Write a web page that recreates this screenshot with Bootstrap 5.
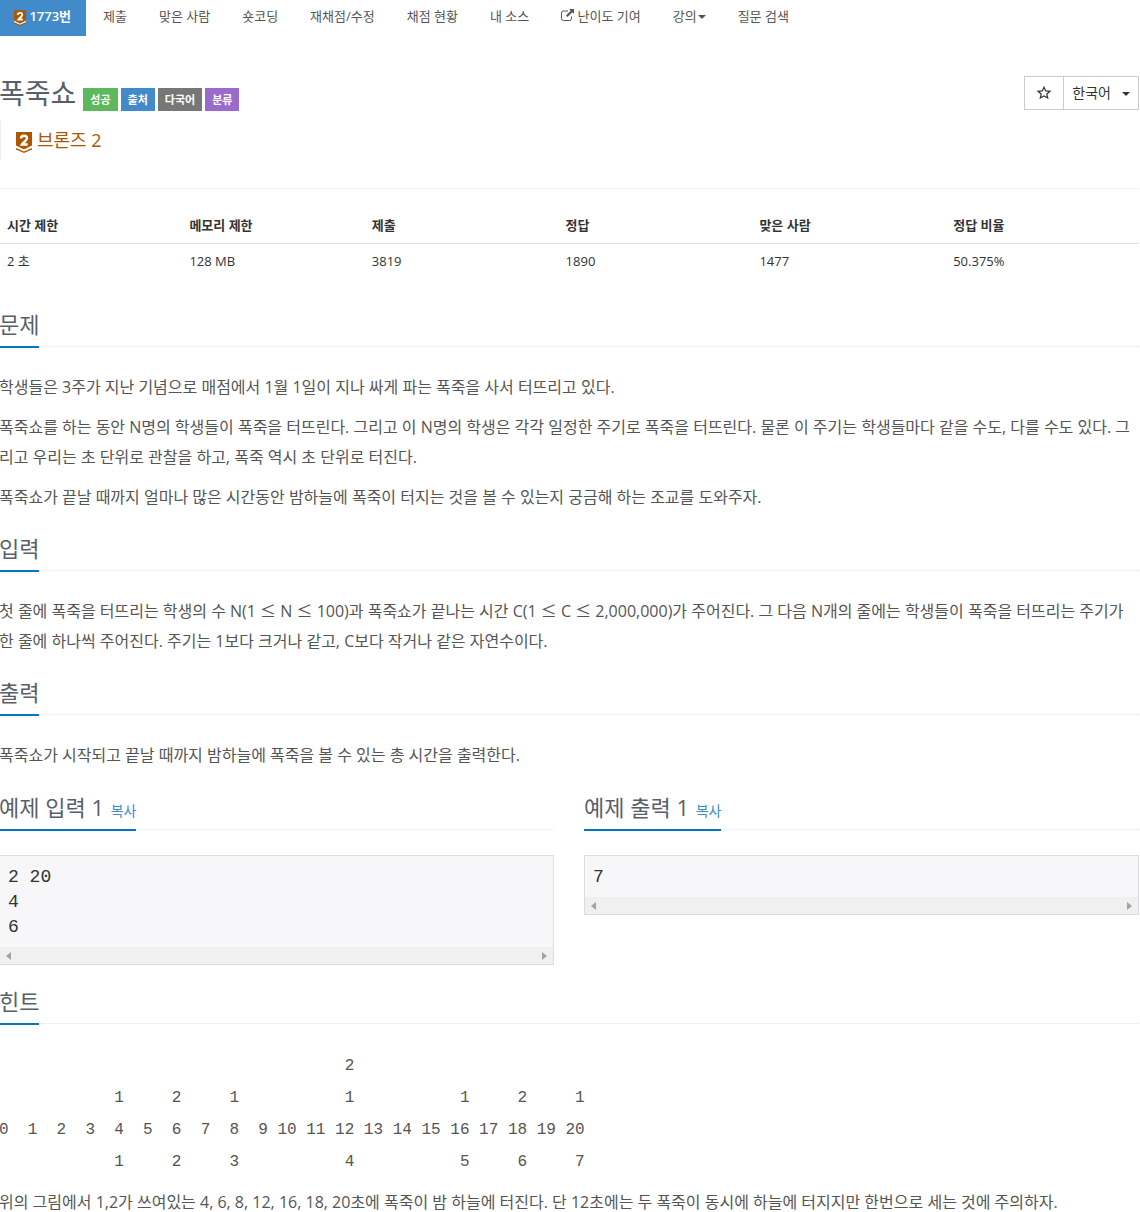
<!DOCTYPE html>
<html lang="ko">
<head>
<meta charset="utf-8">
<meta name="viewport" content="width=device-width, initial-scale=1">
<title>1773번: 폭죽쇼</title>
<link href="https://cdn.jsdelivr.net/npm/bootstrap@5.3.0/dist/css/bootstrap.min.css" rel="stylesheet">
<style>
body{font-family:"Open Sans","Noto Sans CJK KR",sans-serif;font-size:13px;line-height:20px;color:#333}
.page-wrap{margin:0 1px 0 -1px}
a{text-decoration:none;color:#428bca}
.problem-menu{gap:2px;margin-bottom:40px}
.problem-menu .nav-link{border-radius:0;color:#555;padding:6px 15px 10px}
.problem-menu .nav-link.active{background:#428bca;color:#fff;font-weight:600}
.title-row{min-height:35px}
h1{font-size:28px;line-height:35px;font-weight:400;color:#585f69;margin:0 7px 0 0}
.tag-list{gap:3px}
.tag-label{font-size:11px;line-height:15px;font-weight:700;color:#fff;padding:4px 7px}
.bg-ok{background:#5cb85c}.bg-src{background:#428bca}.bg-lang{background:#777}.bg-cls{background:#9b6bcc}
.btn-plain{border:1px solid #ccc;border-radius:0;background:#fff;color:#333;font-size:14px;line-height:20px;padding:6px 8px}
.btn-star{padding:4px 12px 8px}
.btn-plain.dropdown-toggle::after{margin-left:11px}
.dropdown-toggle::after{border-top:4px solid;border-right:4px solid transparent;border-left:4px solid transparent;margin-left:1px;vertical-align:2px}
.tier-line{border-left:2px solid #eee;margin:10px 0 28px;padding:7px 15px;font-size:18px;line-height:24px;color:#ad5600;gap:5px}
.big-tier{margin-top:4px}
.rule{border:0;border-top:1px solid #eee;opacity:1;margin:0 0 20px}
#problem-info{font-size:13px;margin:0 0 30px;table-layout:fixed}
#problem-info th,#problem-info td{line-height:20px;color:#333;border:0;background:none}
#problem-info th{font-weight:700;border-bottom:1px solid #ddd;padding:6px 8px 8px}
#problem-info td{padding:7px 8px 8px}
#problem-info .w-s{width:16%}
#problem-info .w-m{width:17%}
.headline{border-bottom:1px dotted #dfe3ea;margin:0 0 25px}
.headline h2{display:inline-block;font-size:22px;line-height:30px;font-weight:400;color:#585f69;border-bottom:2px solid #0077c0;padding-bottom:7px;margin:0 0 -2px;vertical-align:top}
.headline h2 a{font-size:14px;line-height:14px;margin-left:1px}
.problem-text{font-size:16px;line-height:30px;color:#555;margin-bottom:21px}
.problem-text p{margin:0 0 10px}
.problem-text p:last-child{margin:0}
.rel{font-family:"Noto Sans CJK KR",sans-serif;line-height:20px}
.sample-row{--bs-gutter-x:30px;margin-bottom:21px;padding-top:1px}
.sample-box{border:1px solid #dcdce2;background:#f7f7f9}
.sample-box pre{font-family:"Liberation Mono",monospace;font-size:18px;line-height:25px;color:#333;margin:0;padding:9px 8px 7px}
.scroll-track{background:#f0f0f0;height:17px;padding:0 6px}
.hint-pre{font-family:"Liberation Mono",monospace;font-size:16px;line-height:32px;color:#555;margin:0 0 14px;padding-top:1px;overflow:hidden}
.hint-note{font-size:16px;line-height:20px;color:#555;margin:0}
</style>
<script src="https://cdn.jsdelivr.net/npm/bootstrap@5.3.0/dist/js/bootstrap.bundle.min.js"></script>
</head>
<body>
<div class="page-wrap">
<ul class="nav nav-pills problem-menu">
<li class="nav-item"><a class="nav-link active" href="#"><svg class="align-middle" width="12" height="16" viewBox="0 0 16 21"><path fill="#ad5600" d="M0 0h16v13.500l-8 4-8-4z"/><path fill="#fff" d="M0 14l8 4 8-4v2l-8 4-8-4z"/><path fill="#ad5600" d="M0 16l8 3.500 8-3.500v1.500L8 21l-8-3.500z"/><path fill="none" stroke="#fff" stroke-width="2.500" d="M5 6.500C5 3 11 2.700 11 6.200 11 8.500 7.500 10 6 12.500H11.700"/></svg> 1773번</a></li>
<li class="nav-item"><a class="nav-link" href="#">제출</a></li>
<li class="nav-item"><a class="nav-link" href="#">맞은 사람</a></li>
<li class="nav-item"><a class="nav-link" href="#">숏코딩</a></li>
<li class="nav-item"><a class="nav-link" href="#">재채점/수정</a></li>
<li class="nav-item"><a class="nav-link" href="#">채점 현황</a></li>
<li class="nav-item"><a class="nav-link" href="#">내 소스</a></li>
<li class="nav-item"><a class="nav-link" href="#"><svg class="align-baseline" width="13" height="12" viewBox="0 0 13 12"><path fill="none" stroke="#555" d="M7 2H2.500Q.5 2 .5 4v5.500Q.5 11.500 2.500 11.500h6Q10.500 11.500 10.500 9.500V7.500"/><path fill="#555" d="M8 0h5v5l-1.700-1.700L6.500 8 5 6.500l4.700-4.800z"/></svg> 난이도 기여</a></li>
<li class="nav-item"><a class="nav-link dropdown-toggle" href="#">강의</a></li>
<li class="nav-item"><a class="nav-link" href="#">질문 검색</a></li>
</ul>
<div class="d-flex justify-content-between align-items-start title-row">
<div class="d-flex align-items-end flex-wrap">
<h1>폭죽쇼</h1>
<div class="d-flex tag-list"><span class="tag-label bg-ok">성공</span><span class="tag-label bg-src">출처</span><span class="tag-label bg-lang">다국어</span><span class="tag-label bg-cls">분류</span></div>
</div>
<div class="btn-group"><button type="button" class="btn btn-plain btn-star" aria-label="즐겨찾기"><svg width="14" height="13" viewBox="0 0 14 13"><path fill="none" stroke="#333" stroke-width="1.200" d="M7 1.200l1.700 3.700 4.300.4-3.200 2.700.9 4L7 10l-3.700 2 .9-4L1 5.300l4.300-.4z"/></svg></button><button type="button" class="btn btn-plain dropdown-toggle">한국어</button></div>
</div>
<div class="tier-line d-flex align-items-start"><svg class="big-tier" width="16" height="21" viewBox="0 0 16 21"><path fill="#ad5600" d="M0 0h16v13.500l-8 4-8-4z"/><path fill="#fff" d="M0 14l8 4 8-4v2l-8 4-8-4z"/><path fill="#ad5600" d="M0 16l8 3.500 8-3.500v1.500L8 21l-8-3.500z"/><path fill="none" stroke="#fff" stroke-width="2.500" d="M5 6.500C5 3 11 2.700 11 6.200 11 8.500 7.500 10 6 12.500H11.700"/></svg><span>브론즈 2</span></div>
<hr class="rule">
<table class="table" id="problem-info">
<thead><tr><th class="w-s">시간 제한</th><th class="w-s">메모리 제한</th><th class="w-m">제출</th><th class="w-m">정답</th><th class="w-m">맞은 사람</th><th class="w-m">정답 비율</th></tr></thead>
<tbody><tr><td>2 초</td><td>128 MB</td><td>3819</td><td>1890</td><td>1477</td><td>50.375%</td></tr></tbody>
</table>
<section>
<div class="headline"><h2>문제</h2></div>
<div class="problem-text">
<p>학생들은 3주가 지난 기념으로 매점에서 1월 1일이 지나 싸게 파는 폭죽을 사서 터뜨리고 있다.</p>
<p>폭죽쇼를 하는 동안 N명의 학생들이 폭죽을 터뜨린다. 그리고 이 N명의 학생은 각각 일정한 주기로 폭죽을 터뜨린다. 물론 이 주기는 학생들마다 같을 수도, 다를 수도 있다. 그리고 우리는 초 단위로 관찰을 하고, 폭죽 역시 초 단위로 터진다.</p>
<p>폭죽쇼가 끝날 때까지 얼마나 많은 시간동안 밤하늘에 폭죽이 터지는 것을 볼 수 있는지 궁금해 하는 조교를 도와주자.</p>
</div>
</section>
<section>
<div class="headline"><h2>입력</h2></div>
<div class="problem-text">
<p>첫 줄에 폭죽을 터뜨리는 학생의 수 N(1 <span class="rel">≤</span> N <span class="rel">≤</span> 100)과 폭죽쇼가 끝나는 시간 C(1 <span class="rel">≤</span> C <span class="rel">≤</span> 2,000,000)가 주어진다. 그 다음 N개의 줄에는 학생들이 폭죽을 터뜨리는 주기가 한 줄에 하나씩 주어진다. 주기는 1보다 크거나 같고, C보다 작거나 같은 자연수이다.</p>
</div>
</section>
<section>
<div class="headline"><h2>출력</h2></div>
<div class="problem-text">
<p>폭죽쇼가 시작되고 끝날 때까지 밤하늘에 폭죽을 볼 수 있는 총 시간을 출력한다.</p>
</div>
</section>
<div class="row sample-row">
<section class="col-6">
<div class="headline"><h2>예제 입력 1 <a href="#">복사</a></h2></div>
<div class="sample-box"><pre>2 20
4
6</pre><div class="scroll-track d-flex justify-content-between align-items-center"><svg width="5" height="8" viewBox="0 0 5 8"><path fill="#a3a3a3" d="M5 0v8L0 4z"/></svg><svg width="5" height="8" viewBox="0 0 5 8"><path fill="#a3a3a3" d="M0 0v8l5-4z"/></svg></div></div>
</section>
<section class="col-6">
<div class="headline"><h2>예제 출력 1 <a href="#">복사</a></h2></div>
<div class="sample-box"><pre>7</pre><div class="scroll-track d-flex justify-content-between align-items-center"><svg width="5" height="8" viewBox="0 0 5 8"><path fill="#a3a3a3" d="M5 0v8L0 4z"/></svg><svg width="5" height="8" viewBox="0 0 5 8"><path fill="#a3a3a3" d="M0 0v8l5-4z"/></svg></div></div>
</section>
</div>
<section>
<div class="headline"><h2>힌트</h2></div>
<pre class="hint-pre">                                    2
            1     2     1           1           1     2     1
0  1  2  3  4  5  6  7  8  9 10 11 12 13 14 15 16 17 18 19 20
            1     2     3           4           5     6     7</pre>
<p class="hint-note">위의 그림에서 1,2가 쓰여있는 4, 6, 8, 12, 16, 18, 20초에 폭죽이 밤 하늘에 터진다. 단 12초에는 두 폭죽이 동시에 하늘에 터지지만 한번으로 세는 것에 주의하자.</p>
</section>
</div>
</body>
</html>
